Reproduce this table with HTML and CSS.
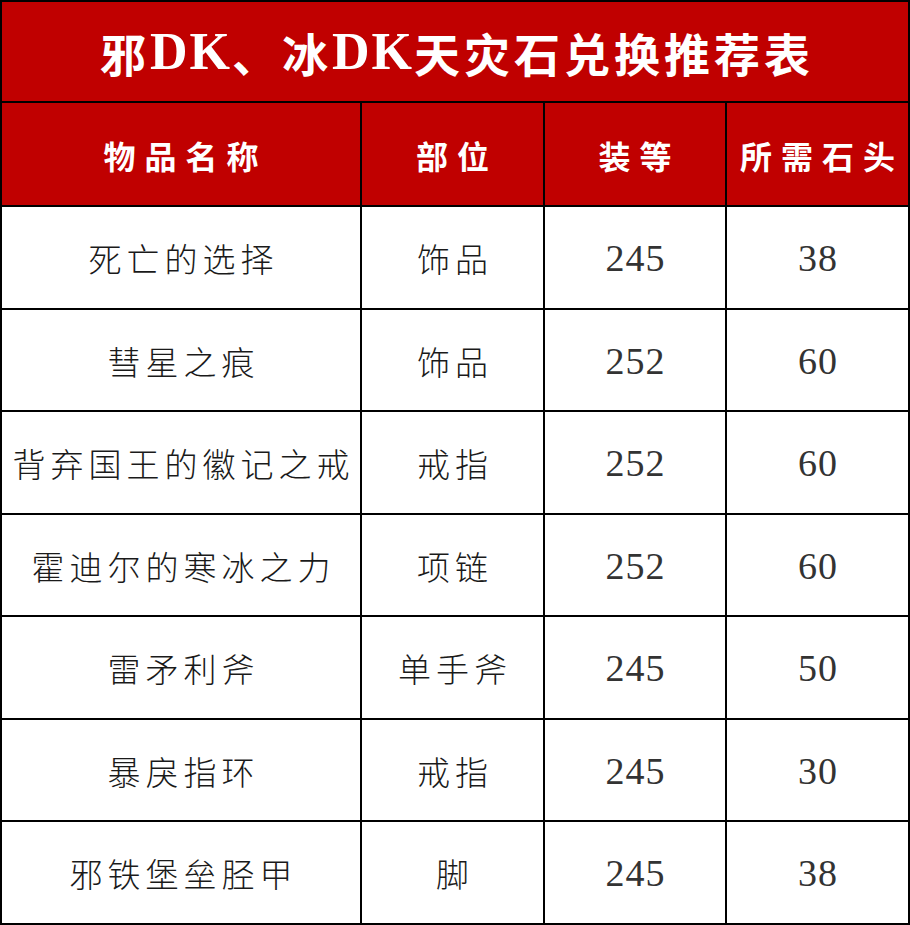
FILE: index.html
```html
<!DOCTYPE html>
<html lang="zh-CN">
<head>
<meta charset="utf-8">
<title>邪DK、冰DK天灾石兑换推荐表</title>
<link rel="stylesheet" href="styles.css">
</head>
<body>
<div class="sheet">
  <div class="cell title">邪<span class="latin">DK</span>、冰<span class="latin">DK</span>天灾石兑换推荐表</div>
  <div class="cell head">物品名称</div>
  <div class="cell head">部位</div>
  <div class="cell head">装等</div>
  <div class="cell head">所需石头</div>

  <div class="cell">死亡的选择</div>
  <div class="cell">饰品</div>
  <div class="cell num">245</div>
  <div class="cell num">38</div>

  <div class="cell">彗星之痕</div>
  <div class="cell">饰品</div>
  <div class="cell num">252</div>
  <div class="cell num">60</div>

  <div class="cell">背弃国王的徽记之戒</div>
  <div class="cell">戒指</div>
  <div class="cell num">252</div>
  <div class="cell num">60</div>

  <div class="cell">霍迪尔的寒冰之力</div>
  <div class="cell">项链</div>
  <div class="cell num">252</div>
  <div class="cell num">60</div>

  <div class="cell">雷矛利斧</div>
  <div class="cell">单手斧</div>
  <div class="cell num">245</div>
  <div class="cell num">50</div>

  <div class="cell">暴戾指环</div>
  <div class="cell">戒指</div>
  <div class="cell num">245</div>
  <div class="cell num">30</div>

  <div class="cell">邪铁堡垒胫甲</div>
  <div class="cell">脚</div>
  <div class="cell num">245</div>
  <div class="cell num">38</div>
</div>
</body>
</html>
```

FILE: styles.css
```css
html, body {
  margin: 0;
  padding: 0;
  background: #ffffff;
}

.sheet {
  width: 910px;
  box-sizing: border-box;
  padding: 2px;
  background: #000000;
  display: grid;
  grid-template-columns: 358px 181px 180px 181px;
  grid-template-rows: 99px 102px repeat(7, 100.5px);
  gap: 2px;
  font-family: "Noto Sans CJK SC", "Noto Sans", sans-serif;
}

.cell {
  background: #ffffff;
  color: #1a1a1a;
  display: flex;
  align-items: center;
  justify-content: center;
  font-size: 33px;
  font-weight: 300;
  letter-spacing: 5px;
  padding-left: 5px;
  white-space: nowrap;
  padding-top: 2px;
  box-sizing: border-box;
}

.num {
  font-family: "Liberation Serif", "DejaVu Serif", serif;
  font-size: 38px;
  font-weight: 400;
  letter-spacing: 1px;
  padding-left: 1px;
  color: #333333;
}

.title {
  grid-column: 1 / -1;
  background: #c00000;
  color: #ffffff;
  font-size: 46px;
  font-weight: 700;
  letter-spacing: 4px;
  padding-left: 4px;
  padding-top: 0;
}

.latin {
  font-family: "Liberation Serif", "DejaVu Serif", serif;
  font-size: 52px;
  font-weight: 700;
  letter-spacing: 2px;
}

.head {
  background: #c00000;
  color: #ffffff;
  font-size: 32px;
  font-weight: 700;
  letter-spacing: 9px;
  padding-left: 9px;
}
```
